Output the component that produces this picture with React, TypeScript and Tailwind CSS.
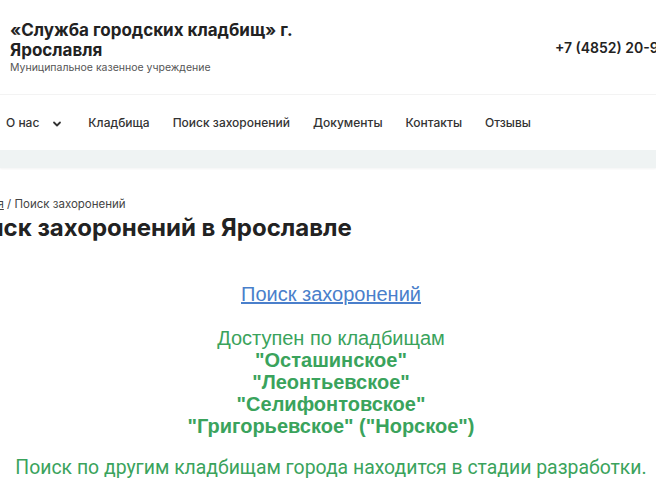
import React from 'react';

const navItems = ['Кладбища', 'Поиск захоронений', 'Документы', 'Контакты', 'Отзывы'];

const cemeteries = ['"Осташинское"', '"Леонтьевское"', '"Селифонтовское"', '"Григорьевское" ("Норское")'];

const App: React.FC = () => {
  return (
    <div className="w-[656px] h-[493px] overflow-hidden bg-white text-[#222] font-['Inter',sans-serif]">
      <header className="flex items-start justify-between pl-[10px] pt-[20px] h-[95px] border-b border-[#f3f3f3]">
        <div>
          <div className="text-[17px] font-bold leading-[20px] w-[320px]">
            «Служба городских кладбищ» г. Ярославля
          </div>
          <div className="text-[10.5px] text-[#555] leading-[14px] mt-[1px]">Муниципальное казенное учреждение</div>
        </div>
        <div className="mt-[17px] -mr-[37px] text-[14px] font-semibold whitespace-nowrap">+7 (4852) 20-90-00</div>
      </header>

      <nav className="flex items-center h-[55px] pl-[6px] text-[12px] font-medium text-[#333]">
        <div className="flex items-center">
          <span>О нас</span>
          <svg className="ml-[13px] mt-[2px]" width="10" height="10" viewBox="0 0 10 10" fill="none">
            <path d="M2 3.5 5 6.5 8 3.5" stroke="#333" strokeWidth="1.8" strokeLinecap="round" strokeLinejoin="round" />
          </svg>
        </div>
        <div className="flex gap-[23px] ml-[26px]">
          {navItems.map(item => (
            <span key={item}>{item}</span>
          ))}
        </div>
      </nav>

      <div className="h-[18px] bg-[#eff3f3] shadow-[0_1px_2px_rgba(0,0,0,0.05)]" />

      <div className="mt-[28px] -ml-[42px]">
        <div className="text-[11.5px] text-[#444] leading-[16px]">
          <span className="underline">Главная</span> / Поиск захоронений
        </div>
      </div>
      <h1 className="-ml-[44px] mt-[1px] text-[24px] font-bold leading-[30px] whitespace-nowrap">
        Поиск захоронений в Ярославле
      </h1>

      <div className="w-[662px] text-center mt-[40px] font-['Liberation_Sans',Arial,sans-serif] text-[20px]">
        <div className="leading-[23px]">
          <a className="text-[#4a7fcb] underline">Поиск захоронений</a>
        </div>
        <div className="mt-[21px] text-[#3aa35c] leading-[22px]">
          <div>Доступен по кладбищам</div>
          {cemeteries.map(c => (
            <div key={c} className="font-bold">{c}</div>
          ))}
        </div>
        <div className="mt-[19px] text-[#3aa35c] text-[19.4px] leading-[23px] font-['Roboto',sans-serif] whitespace-nowrap">
          Поиск по другим кладбищам города находится в стадии разработки.
        </div>
      </div>
    </div>
  );
};

export default App;
